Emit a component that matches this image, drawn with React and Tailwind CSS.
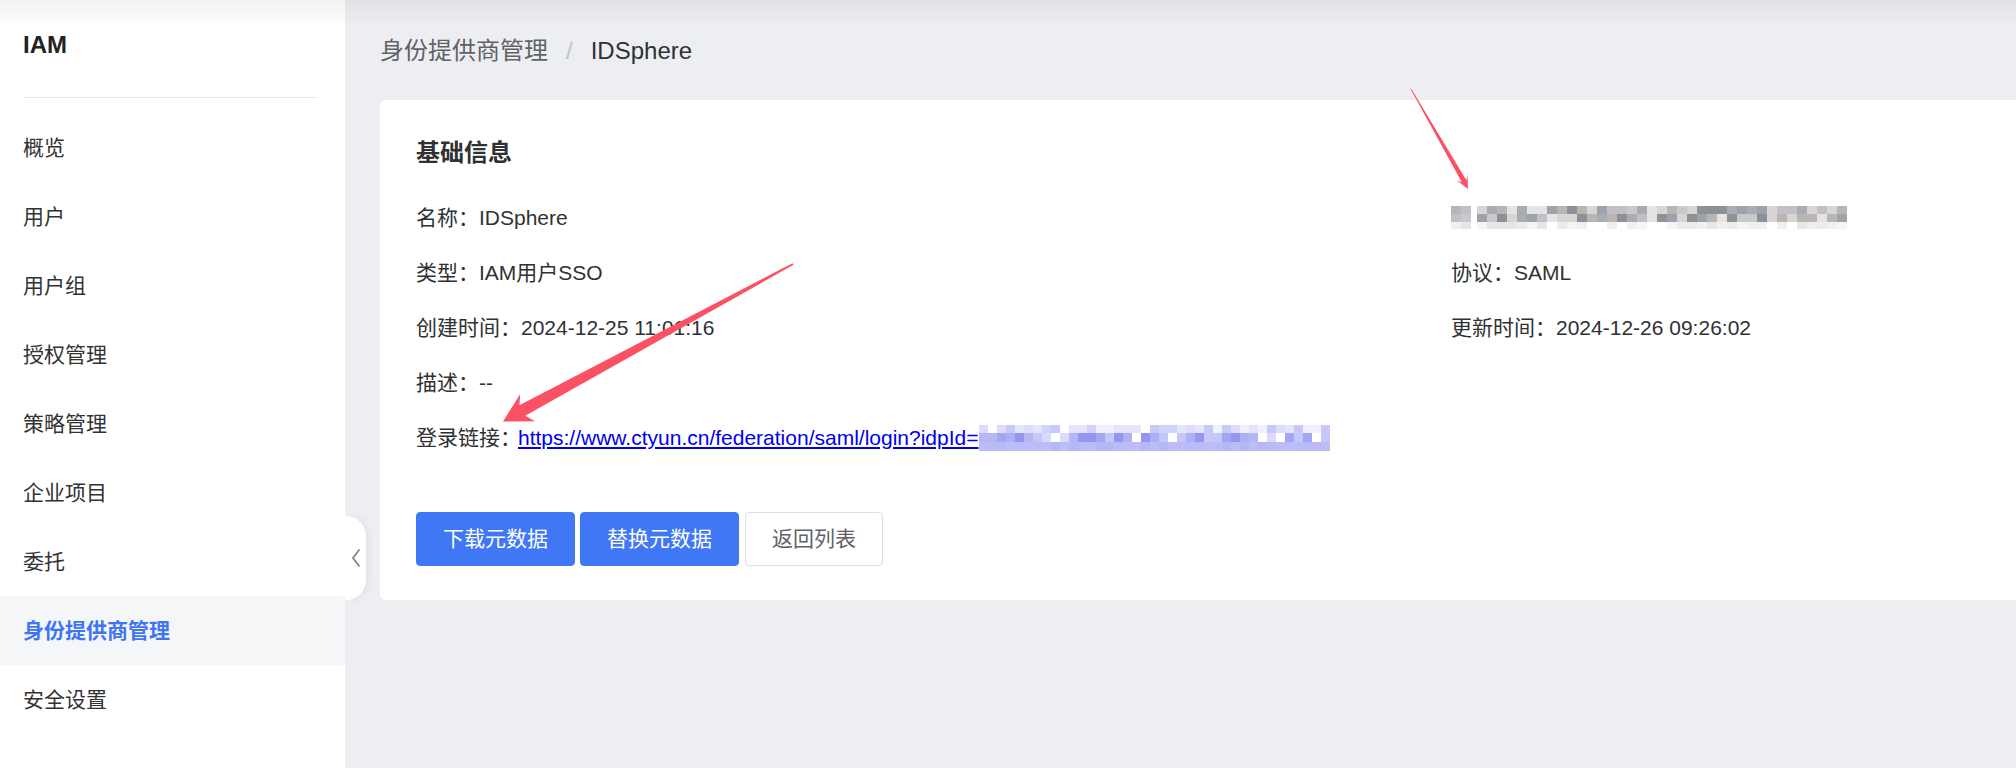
import React from 'react';

// --- Static data ---
const menuItems = ['概览', '用户', '用户组', '授权管理', '策略管理', '企业项目', '委托', '身份提供商管理', '安全设置'];
const activeItem = '身份提供商管理';

const font = "font-['Liberation_Sans','Noto_Sans_CJK_SC',sans-serif]";

// palettes for the pixelated (mosaic) areas in the screenshot
const linkTop = ['bg-[#e4e4fc]', 'bg-[#d2d3fa]', 'bg-[#f1f1fe]', 'bg-white', 'bg-[#c8c9f8]', 'bg-[#dcdcfb]'];
const linkMid = ['bg-[#b4b6f6]', 'bg-[#a3a6f3]', 'bg-[#9497f1]', 'bg-[#c5c7f8]', 'bg-[#dadafb]', 'bg-white', 'bg-[#aeb0f5]'];
const linkBottom = ['bg-[#b9baf6]', 'bg-[#b6b8f6]', 'bg-[#bcbdf7]'];
const grayTop = ['bg-[#c9c9cc]', 'bg-[#a9adb3]', 'bg-[#b8b5b3]', 'bg-[#d8d6d4]', 'bg-[#9ea3ab]', 'bg-[#e6e4e2]', 'bg-[#c2c0c6]', 'bg-[#8d9299]'];
const grayBottom = ['bg-[#f0f0f0]', 'bg-[#e6e6e6]', 'bg-white', 'bg-[#f5f5f5]', 'bg-[#ebebeb]'];

const rand = (i, r) => {
  const v = Math.sin(i * 12.9898 + r * 78.233) * 43758.5453;
  return v - Math.floor(v);
};

function Mosaic({ cols, cell, rows, seed }) {
  return (
    <div className="flex flex-col">
      {rows.map((row, r) => (
        <div key={r} className="flex">
          {Array.from({ length: cols }).map((_, i) => {
            const palette = row.palette;
            const cls = palette[Math.floor(rand(i + seed, r + seed) * palette.length)];
            return <div key={i} className={`${row.h} ${cell} ${cls}`} />;
          })}
        </div>
      ))}
    </div>
  );
}

function Sidebar() {
  return (
    <aside className="w-[345px] shrink-0 bg-white h-full">
      <div className="h-[98px] mx-[23px] w-[294px] border-b border-[#e6e6ee] flex items-center pb-[8px]">
        <span className="text-[24px] font-bold text-[#222]">IAM</span>
      </div>
      <nav className="mt-[15px]">
        {menuItems.map((item) => (
          <div
            key={item}
            className={`h-[69px] flex items-center pl-[23px] text-[21px] ${
              item === activeItem ? 'bg-[#f5f6f8] text-[#3f74f4] font-bold' : 'text-[#333]'
            }`}
          >
            {item}
          </div>
        ))}
      </nav>
    </aside>
  );
}

function InfoRow({ children }) {
  return <div className="h-[55px] flex items-center text-[21px] text-[#303133] whitespace-nowrap">{children}</div>;
}

function DetailCard() {
  return (
    <div className="bg-white rounded-l-[6px] h-[500px] pt-[37px] pl-[36px]">
      <h2 className="h-[32px] leading-[32px] text-[24px] font-bold text-[#303133]">基础信息</h2>

      <div className="mt-[21px] flex">
        {/* left column */}
        <div className="w-[1035px]">
          <InfoRow>名称：IDSphere</InfoRow>
          <InfoRow>类型：IAM用户SSO</InfoRow>
          <InfoRow>创建时间：2024-12-25 11:01:16</InfoRow>
          <InfoRow>描述：--</InfoRow>
          <InfoRow>
            <span className="-mr-[3px]">登录链接：</span>
            <a href="#" className="text-[#0000ee] underline">https://www.ctyun.cn/federation/saml/login?idpId=</a>
            <Mosaic
              cols={39}
              cell="w-[9px]"
              seed={3}
              rows={[
                { h: 'h-[8px]', palette: linkTop },
                { h: 'h-[9px]', palette: linkMid },
                { h: 'h-[9px]', palette: linkBottom },
              ]}
            />
          </InfoRow>
        </div>

        {/* right column */}
        <div className="flex-1">
          <InfoRow>
            <div className="flex gap-[6px]">
              <Mosaic
                cols={2}
                cell="w-[10px]"
                seed={11}
                rows={[
                  { h: 'h-[8px]', palette: grayTop },
                  { h: 'h-[8px]', palette: grayTop },
                  { h: 'h-[7px]', palette: grayBottom },
                ]}
              />
              <Mosaic
                cols={37}
                cell="w-[10px]"
                seed={21}
                rows={[
                  { h: 'h-[8px]', palette: grayTop },
                  { h: 'h-[8px]', palette: grayTop },
                  { h: 'h-[7px]', palette: grayBottom },
                ]}
              />
            </div>
          </InfoRow>
          <InfoRow>协议：SAML</InfoRow>
          <InfoRow>更新时间：2024-12-26 09:26:02</InfoRow>
        </div>
      </div>

      <div className="mt-[47px] flex gap-[5px]">
        <button className="h-[54px] px-[26px] text-[21px] rounded-[4px] bg-[#4077f4] border border-[#4077f4] text-white">
          下载元数据
        </button>
        <button className="h-[54px] px-[26px] text-[21px] rounded-[4px] bg-[#4077f4] border border-[#4077f4] text-white">
          替换元数据
        </button>
        <button className="ml-px h-[54px] px-[26px] text-[21px] rounded-[4px] bg-white border border-[#dcdfe6] text-[#606266]">
          返回列表
        </button>
      </div>
    </div>
  );
}

export default function App() {
  return (
    <div className={`relative w-full h-[768px] overflow-hidden flex ${font}`}>
      <Sidebar />

      <main className="flex-1 bg-[#eceef2] pl-[35px]">
        <div className="h-[100px] flex items-center pt-[2px] text-[24px]">
          <span className="text-[#606266]">身份提供商管理</span>
          <span className="mx-[18px] text-[#c0c4cc]">/</span>
          <span className="text-[#303133]">IDSphere</span>
        </div>
        <DetailCard />
      </main>

      {/* sidebar collapse tab */}
      <div className="absolute left-[345px] top-[516px] w-[21px] h-[84px] bg-white rounded-r-[20px] shadow-[3px_0_6px_rgba(0,0,0,0.05)] flex items-center justify-center">
        <svg width="10" height="20" viewBox="0 0 10 20" fill="none">
          <polyline points="8,2 2,10 8,18" stroke="#8a8a8a" strokeWidth="2" strokeLinecap="round" strokeLinejoin="round" />
        </svg>
      </div>

      {/* top shadow from the header above */}
      <div className="pointer-events-none absolute top-0 left-0 right-0 h-[28px] bg-gradient-to-b from-black/[0.05] to-transparent" />

      {/* red annotation arrows */}
      <svg className="pointer-events-none absolute inset-0" width="2016" height="768" viewBox="0 0 2016 768">
        <polygon
          points="793.5,264.8 525.2,415.8 535,421.3 503,421.5 520.2,394.1 519.4,405.2 792.5,263.2"
          fill="#fc5063"
        />
        <polygon
          points="1411.3,88.8 1466.2,179.9 1467.4,174.6 1468,189 1456.8,180.6 1461.8,182.3 1410.7,89.2"
          fill="#fc5063"
        />
      </svg>
    </div>
  );
}
